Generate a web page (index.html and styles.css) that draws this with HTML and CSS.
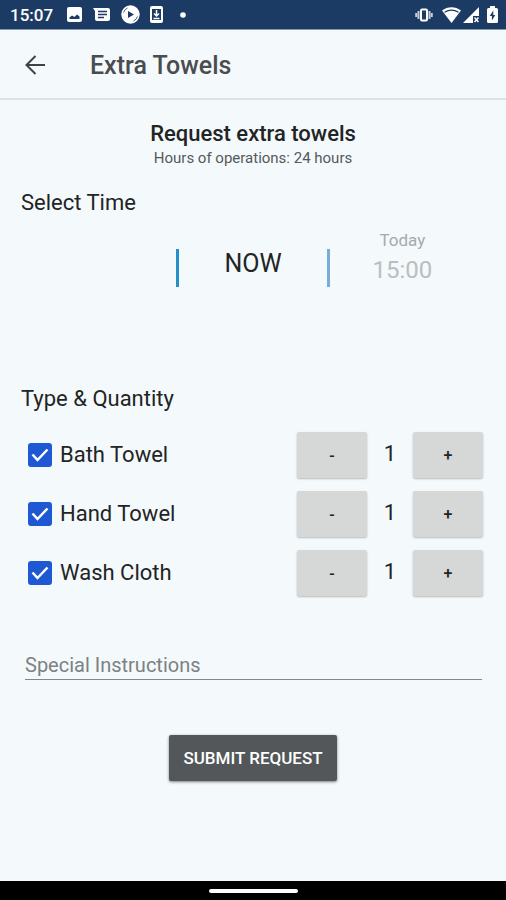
FILE: index.html
```html
<!DOCTYPE html>
<html lang="en">
<head>
<meta charset="utf-8">
<meta name="viewport" content="width=device-width, initial-scale=1">
<title>Extra Towels</title>
<link rel="stylesheet" href="styles.css">
</head>
<body>
<div class="status-bar">
  <span class="clock">15:07</span>
  <div class="notifications">
    <svg width="15" height="15" viewBox="0 0 15 15" aria-hidden="true"><path fill="#fff" fill-rule="evenodd" d="M2 0h11a2 2 0 0 1 2 2v11a2 2 0 0 1-2 2H2a2 2 0 0 1-2-2V2a2 2 0 0 1 2-2zM2.500 12h10V9.500L10 7.500 7.500 10 5 8.500l-2.500 2z"/></svg>
    <svg width="17" height="15" viewBox="0 0 17 15" aria-hidden="true"><path fill="#fff" d="M0 1h15a2 2 0 0 1 2 2v9a2 2 0 0 1-2 2H4a2 2 0 0 1-2-2V4z"/><path stroke="#1c3b64" stroke-width="1.300" d="M5 4.500h9M5 7.500h9M5 10.500h6"/></svg>
    <svg width="19" height="19" viewBox="0 0 19 19" aria-hidden="true"><circle cx="9.500" cy="9.500" r="9.200" fill="#fff"/><path fill="none" stroke="#1c3b64" stroke-width=".8" d="M2.500 7.500a7 7 0 0 1 4-4.500M16.500 11.500a7 7 0 0 1-4 4.500"/><path fill="#1c3b64" d="M7 6v7l6-3.500z"/></svg>
    <svg class="phone-icon" width="13" height="17" viewBox="0 0 13 17" aria-hidden="true"><rect width="13" height="17" rx="2" fill="#fff"/><path fill="#1c3b64" d="M2 3h9v11H2z"/><path fill="none" stroke="#fff" stroke-width="1.500" d="M6.500 4v6M4 7.500l2.500 2.500L9 7.500M3.500 12.500h6"/></svg>
    <svg class="more-dot" width="6" height="6" viewBox="0 0 6 6" aria-hidden="true"><circle cx="3" cy="3" r="2.800" fill="#fff"/></svg>
  </div>
  <div class="system">
    <svg class="vibrate-icon" width="18" height="14" viewBox="0 0 18 14" aria-hidden="true"><rect x="6" y="1.500" width="6" height="11" rx="1" fill="none" stroke="#fff" stroke-width="2"/><path fill="none" stroke="#c3ccd9" stroke-width="2" d="M3.500 3v8M14.500 3v8M1.200 5v4M16.800 5v4"/></svg>
    <svg width="19" height="16" viewBox="0 0 19 16" aria-hidden="true"><path fill="#fff" d="M0 3.500C5.500-1 13.500-1 19 3.500L9.500 16z"/><path fill="none" stroke="#1c3b64" stroke-width="1.300" d="M2.500 5.300c4.500-2.800 9.500-2.800 14 0"/></svg>
    <svg width="16" height="16" viewBox="0 0 16 16" aria-hidden="true"><path fill="#fff" d="M16 0v9h-6v7H0z"/><path fill="none" stroke="#fff" stroke-width="1.500" d="M11.500 10.500l4 4.500M15.500 10.500l-4 4.500"/></svg>
    <svg class="battery-icon" width="11" height="17" viewBox="0 0 11 17" aria-hidden="true"><path fill="#fff" d="M3 0h5v2h1.500A1.500 1.500 0 0 1 11 3.500v12A1.500 1.500 0 0 1 9.500 17h-8A1.500 1.500 0 0 1 0 15.500v-12A1.500 1.500 0 0 1 1.500 2H3z"/><path fill="#1c3b64" d="M6.300 4.500L2.700 10h2.200v4.500L8.300 9H6.300z"/></svg>
  </div>
</div>
<header class="app-bar">
  <button class="back" type="button" aria-label="Back">
    <svg width="20" height="20" viewBox="0 0 20 20" aria-hidden="true"><path fill="none" stroke="#404345" stroke-width="2" d="M20 10H2M10.500 1L1.500 10l9 9"/></svg>
  </button>
  <h1 class="app-title">Extra Towels</h1>
</header>
<main class="content">
  <form class="request">
    <div class="intro">
      <h2 class="intro-title">Request extra towels</h2>
      <p class="hours">Hours of operations: 24 hours</p>
    </div>
    <h3 class="section-title">Select Time</h3>
    <div class="time-picker">
      <button class="slot slot-selected" type="button">NOW</button>
      <button class="slot slot-next" type="button"><span class="slot-day">Today</span><span>15:00</span></button>
    </div>
    <h3 class="section-title">Type &amp; Quantity</h3>
    <div class="items">
      <div class="item">
        <label class="item-name"><input class="check" type="checkbox" checked>Bath Towel</label>
        <button class="step" type="button" aria-label="Fewer bath towels">-</button>
        <output class="count">1</output>
        <button class="step" type="button" aria-label="More bath towels">+</button>
      </div>
      <div class="item">
        <label class="item-name"><input class="check" type="checkbox" checked>Hand Towel</label>
        <button class="step" type="button" aria-label="Fewer hand towels">-</button>
        <output class="count">1</output>
        <button class="step" type="button" aria-label="More hand towels">+</button>
      </div>
      <div class="item">
        <label class="item-name"><input class="check" type="checkbox" checked>Wash Cloth</label>
        <button class="step" type="button" aria-label="Fewer wash cloths">-</button>
        <output class="count">1</output>
        <button class="step" type="button" aria-label="More wash cloths">+</button>
      </div>
    </div>
    <input class="instructions" type="text" placeholder="Special Instructions" aria-label="Special Instructions">
    <button class="submit" type="submit">SUBMIT REQUEST</button>
  </form>
</main>
<div class="nav-bar"><span class="nav-handle"></span></div>
</body>
</html>
```

FILE: styles.css
```css
* {
  box-sizing: border-box;
}

body {
  margin: 0;
  min-height: 100vh;
  display: flex;
  flex-direction: column;
  background: #f4f9fb;
  color: #222425;
  font-family: Roboto, "Liberation Sans", sans-serif;
}

h1, h2, h3, p {
  margin: 0;
}

button, input {
  font-family: inherit;
  color: inherit;
}

button {
  border: 0;
  padding: 0;
  background: none;
}

svg {
  display: block;
}

.status-bar {
  display: flex;
  align-items: center;
  height: 30px;
  padding: 0 8px 0 10px;
  border-bottom: 1px solid #8798ad;
  background: #1c3b64;
  color: #fff;
}

.clock {
  font-size: 17px;
  font-weight: 500;
}

.notifications {
  display: flex;
  align-items: center;
  gap: 11px;
  margin-left: 14px;
}

.phone-icon {
  margin-left: -1px;
}

.more-dot {
  margin-left: 6px;
}

.system {
  display: flex;
  align-items: center;
  gap: 2px;
  margin-left: auto;
}

.vibrate-icon {
  margin-right: 7px;
}

.battery-icon {
  margin-left: 6px;
}

.app-bar {
  display: flex;
  align-items: center;
  gap: 45px;
  height: 70px;
  padding: 2px 25px 0;
  border-bottom: 2px solid #dde1e3;
}

.app-title {
  color: #4a4d4f;
  font-size: 25px;
  font-weight: 500;
}

.content {
  flex: 1;
  padding: 20px 21px 40px;
}

.request {
  display: flex;
  flex-direction: column;
}

.intro {
  text-align: center;
}

.intro-title {
  font-size: 22px;
  line-height: 27px;
  font-weight: 500;
}

.hours {
  color: #55595b;
  font-size: 15px;
  line-height: 22px;
}

.section-title {
  margin-top: 20px;
  font-size: 22px;
  line-height: 28px;
  font-weight: 400;
}

.time-picker {
  display: grid;
  grid-template-columns: repeat(3, 1fr);
  align-items: start;
  height: 148px;
  margin: 0 2px;
  padding-top: 11px;
}

.slot {
  font-size: 25px;
  line-height: 30px;
}

.slot-selected {
  grid-column: 2;
  height: 38px;
  margin-top: 21px;
  padding-bottom: 10px;
  border-left: 3px solid #2590c8;
  border-right: 3px solid #76addb;
}

.slot-next {
  display: flex;
  flex-direction: column;
  align-items: center;
  gap: 3px;
  padding-right: 8px;
  color: #babec0;
  font-size: 24px;
}

.slot-day {
  color: #a6aaac;
  font-size: 17px;
  line-height: 24px;
}

.items {
  display: grid;
  gap: 13px;
  margin: 19px 2px 0 7px;
}

.item {
  display: grid;
  grid-template-columns: 1fr 70px 46px 70px;
  align-items: center;
}

.item-name {
  display: flex;
  align-items: center;
  gap: 8px;
  padding-bottom: 1px;
  font-size: 22px;
}

.check {
  appearance: none;
  width: 24px;
  height: 24px;
  margin: 0;
  border: 2px solid #1f58d3;
  border-radius: 3px;
}

.check:checked {
  background: #1f58d3 url("data:image/svg+xml,%3Csvg xmlns='http://www.w3.org/2000/svg' viewBox='0 0 20 20'%3E%3Cpath d='M2.500 9.500l5 5.500L17.500 4.500' fill='none' stroke='%23fff' stroke-width='2.500'/%3E%3C/svg%3E") center / 20px no-repeat;
}

.step {
  height: 46px;
  border-radius: 2px;
  background: #d6d8d8;
  box-shadow: 0 1px 2px #00000040;
  font-size: 16px;
  font-weight: 500;
}

.count {
  padding-bottom: 3px;
  font-size: 22px;
  text-align: center;
}

.instructions {
  height: 34px;
  margin: 50px 3px 0 4px;
  padding: 4px 0 0;
  border: 0;
  border-bottom: 1px solid #7f898c;
  border-radius: 0;
  outline: 0;
  background: none;
  font-size: 20px;
}

.instructions::placeholder {
  color: #7c8183;
  opacity: 1;
}

.submit {
  align-self: center;
  height: 46px;
  margin-top: 55px;
  padding: 0 14px;
  border-radius: 2px;
  background: #53575a;
  box-shadow: 0 1px 3px #00000080;
  color: #fff;
  font-size: 17px;
  font-weight: 500;
}

.nav-bar {
  display: flex;
  justify-content: center;
  align-items: center;
  height: 19px;
  background: #000;
}

.nav-handle {
  width: 89px;
  height: 4px;
  border-radius: 2px;
  background: #fff;
}
```
